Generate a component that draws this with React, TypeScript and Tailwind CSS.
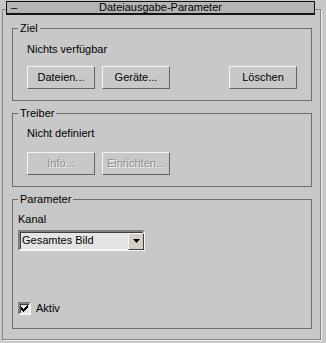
const raisedBtn =
  'h-[23px] w-[68px] bg-[#c8c8c8] border border-t-[#f4f4f4] border-l-[#f4f4f4] border-b-[#646464] border-r-[#646464] flex items-center justify-center';

const Button = ({ label, disabled }: { label: string; disabled?: boolean }) => (
  <div className={raisedBtn}>
    <span className={disabled ? 'text-[#8e8e8e] [text-shadow:1px_1px_0_#f4f4f4]' : ''}>{label}</span>
  </div>
);

const Group = ({ title, children, className }: { title: string; children: React.ReactNode; className?: string }) => (
  <fieldset className={`border border-[#6e6e6e] ml-[9px] w-[300px] ${className ?? ''}`}>
    <legend className="ml-[5px] px-[2px] leading-[13px]">{title}</legend>
    {children}
  </fieldset>
);

export default function App() {
  return (
    <div className="w-[326px] h-[343px] bg-[#c8c8c8] pt-[9px] pl-[2px] font-['Liberation_Sans',Arial,sans-serif] text-[11px] leading-[13px] text-black overflow-hidden">
      {/* rollout frame */}
      <div className="w-[319px] h-[331px] border border-[#868686] shadow-[1px_1px_0_#ececec]">
        {/* rollout title */}
        <div className="relative -mt-[9px] ml-[3px] w-[309px] h-[14px] bg-[#b4b4b4] border border-[#141414] border-b-2 flex items-center">
          <span className="absolute left-[4px] top-[-1px]">–</span>
          <span className="flex-1 text-center">Dateiausgabe-Parameter</span>
        </div>

        <Group title="Ziel" className="mt-[7px]">
          <div className="px-[14px] pt-[8px] pb-[11px]">
            <div>Nichts verfügbar</div>
            <div className="mt-[10px] flex">
              <Button label="Dateien..." />
              <div className="ml-[7px]">
                <Button label="Geräte..." />
              </div>
              <div className="ml-auto mr-[0px]">
                <Button label="Löschen" />
              </div>
            </div>
          </div>
        </Group>

        <Group title="Treiber" className="mt-[6px]">
          <div className="px-[14px] pt-[7px] pb-[11px]">
            <div>Nicht definiert</div>
            <div className="mt-[12px] flex gap-[7px]">
              <Button label="Info..." disabled />
              <Button label="Einrichten..." disabled />
            </div>
          </div>
        </Group>

        <Group title="Parameter" className="mt-[6px]">
          <div className="px-[5px] pt-[7px] pb-[13px]">
            <div>Kanal</div>
            <div className="mt-[4px] w-[127px] h-[21px] bg-[#e4e4e4] border-2 border-t-[#808080] border-l-[#808080] border-b-[#f4f4f4] border-r-[#f4f4f4] shadow-[inset_1px_1px_0_#404040] flex items-center">
              <span className="pl-[2px] flex-1">Gesamtes Bild</span>
              <div className="h-[17px] w-[16px] mt-[1px] mr-[-1px] bg-[#d4d0c8] border border-t-[#f4f4f4] border-l-[#f4f4f4] border-b-[#404040] border-r-[#404040] flex items-center justify-center">
                <svg width="7" height="4" viewBox="0 0 7 4">
                  <path d="M0 0h7L3.5 4z" fill="#000" />
                </svg>
              </div>
            </div>
            <div className="mt-[51px] flex items-center">
              <div className="w-[13px] h-[13px] bg-[#e4e4e4] border-2 border-t-[#808080] border-l-[#808080] border-b-[#f4f4f4] border-r-[#f4f4f4] shadow-[inset_1px_1px_0_#404040] flex items-center justify-center">
                <svg width="7" height="7" viewBox="0 0 7 7" shapeRendering="crispEdges">
                  <path d="M0 2h1v1h1v1h1v-1h1v-1h1v-1h1v-1h1v3h-1v1h-1v1h-1v1h-1v1h-1v-1h-1v-1h-1v-1h-1z" fill="#000" />
                </svg>
              </div>
              <span className="ml-[5px]">Aktiv</span>
            </div>
          </div>
        </Group>
      </div>
    </div>
  );
}
